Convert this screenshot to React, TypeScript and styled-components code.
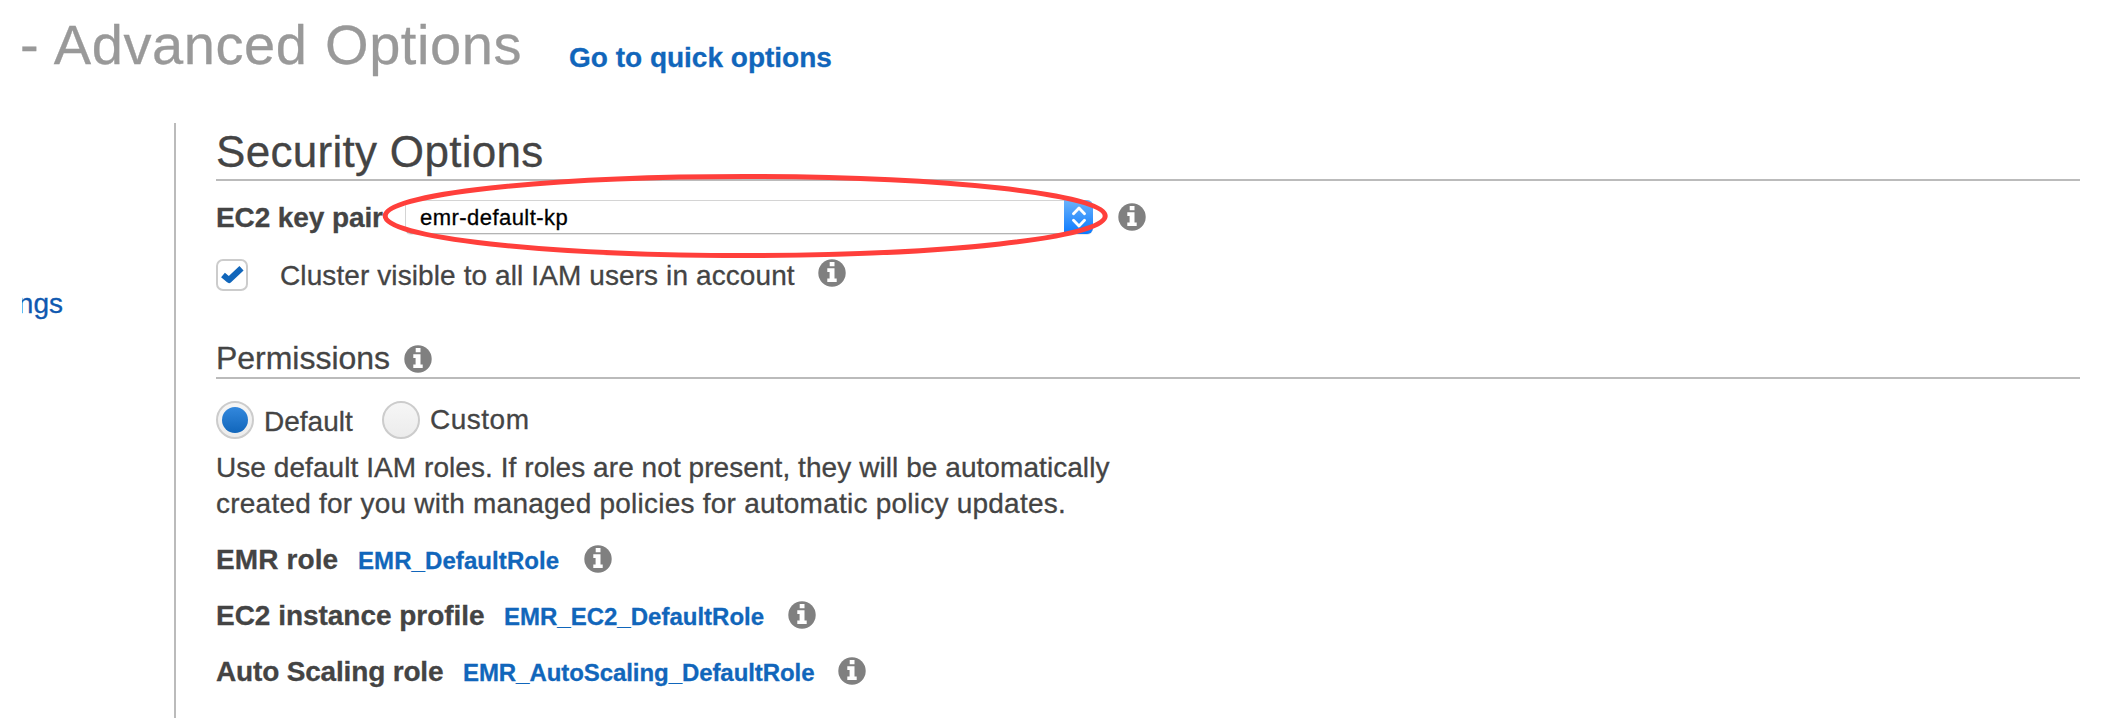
import React from 'react';
import styled, { createGlobalStyle } from 'styled-components';

const GlobalStyle = createGlobalStyle`
  * { box-sizing: border-box; }
  body {
    margin: 0;
    background: #fff;
    color: #444;
    font-family: "Liberation Sans", Arial, sans-serif;
    font-size: 28px;
    -webkit-text-stroke-width: 0.3px;
    overflow: hidden;
  }
`;

const Page = styled.div`
  width: 2102px;
  height: 718px;
  display: flex;
  flex-direction: column;
`;

const Header = styled.header`
  display: flex;
  height: 123px;
  padding-left: 20px;
  gap: 47px;
`;

const Title = styled.h1`
  margin: 13px 0 0;
  font-size: 56px;
  font-weight: 400;
  line-height: 64px;
  letter-spacing: 0.57px;
  word-spacing: 1.5px;
  color: #999;
  white-space: nowrap;
`;

const QuickLink = styled.a`
  margin-top: 40px;
  line-height: 36px;
  font-weight: 700;
  color: #1166bb;
  white-space: nowrap;
`;

const Body = styled.div`
  display: flex;
  flex: 1;
`;

const Sidebar = styled.nav`
  width: 174px;
  padding: 163px 0 0 22px;
`;

const StepLink = styled.a`
  display: flex;
  justify-content: flex-end;
  width: 41px;
  overflow: hidden;
  line-height: 36px;
  color: #0f59b0;
`;

const Main = styled.main`
  flex: 1;
  border-left: 2px solid #bbb;
  padding: 0 22px 0 40px;
`;

const SectionTitle = styled.h2`
  margin: 0;
  height: 58px;
  padding-top: 4px;
  border-bottom: 2px solid #bbb;
  font-size: 44px;
  font-weight: 400;
  line-height: 50px;
  letter-spacing: 0.3px;
`;

const SubTitle = styled.h3`
  display: flex;
  margin: 0;
  height: 40px;
  gap: 14px;
  border-bottom: 2px solid #bbb;
  font-size: 32px;
  font-weight: 400;
  line-height: 38px;
  letter-spacing: -0.02px;
`;

const KeyPairRow = styled.div`
  position: relative;
  display: flex;
  height: 78px;
  padding-top: 19px;
`;

const Label = styled.span<{ $spacing?: number }>`
  font-weight: 700;
  line-height: 36px;
  letter-spacing: ${(p) => p.$spacing ?? 0}px;
  white-space: nowrap;
`;

const KeyPairLabel = styled(Label)`
  width: 189px;
`;

const Select = styled.div`
  display: flex;
  justify-content: space-between;
  width: 688px;
  height: 34px;
  border: 1px solid #d4d4d4;
  border-bottom: 1px solid #b4b4b4;
  border-right: 0;
  border-radius: 6px;
  box-shadow: 0 1px 0 #e8e8e8;
  padding-left: 14px;
  font-size: 22px;
  line-height: 33px;
  letter-spacing: 0.45px;
  color: #000;
`;

const SelectArrows = styled.span`
  display: flex;
  align-items: center;
  justify-content: center;
  width: 29px;
  height: 34px;
  margin-top: -1px;
  border-radius: 0 6px 6px 0;
  background: linear-gradient(#6cb3fa, #0a7aff);
`;

const Highlight = styled.svg`
  position: absolute;
  left: 166px;
  top: -7px;
`;

const InfoMark = styled.svg<{ $top?: number; $left?: number }>`
  flex: none;
  display: block;
  margin-top: ${(p) => p.$top ?? 0}px;
  margin-left: ${(p) => p.$left ?? 0}px;
`;

const CheckRow = styled.div`
  display: flex;
  height: 80px;
`;

const Checkbox = styled.span`
  display: flex;
  align-items: center;
  justify-content: center;
  width: 32px;
  height: 32px;
  border: 2px solid #ccc;
  border-radius: 7px;
  background: #fff;
`;

const CheckText = styled.span`
  margin: -1px 0 0 32px;
  line-height: 36px;
  letter-spacing: 0.1px;
  white-space: nowrap;
`;

const RadioRow = styled.div`
  display: flex;
  height: 71px;
  padding-top: 22px;
`;

const Radio = styled.span<{ $checked?: boolean }>`
  flex: none;
  display: flex;
  align-items: center;
  justify-content: center;
  width: 38px;
  height: 38px;
  border: 2px solid #ccc;
  border-radius: 50%;
  background: linear-gradient(#f6f6f6, #ececec);
  &::after {
    content: "";
    width: 26px;
    height: 26px;
    border-radius: 50%;
    background: ${(p) => (p.$checked ? 'linear-gradient(#3388dd, #1166bb)' : 'none')};
  }
`;

const RadioText = styled.span<{ $top: number; $width: number; $spacing?: number }>`
  width: ${(p) => p.$width}px;
  margin: ${(p) => p.$top}px 0 0 10px;
  line-height: 36px;
  letter-spacing: ${(p) => p.$spacing ?? 0}px;
`;

const Description = styled.p`
  margin: 0;
  height: 91px;
  line-height: 36px;
`;

const Line = styled.span<{ $spacing: number }>`
  display: block;
  letter-spacing: ${(p) => p.$spacing}px;
  white-space: nowrap;
`;

const RoleRow = styled.div`
  display: flex;
  height: 56px;
`;

const RoleLabel = styled(Label)<{ $width: number }>`
  width: ${(p) => p.$width}px;
  padding-top: 1px;
`;

const RoleLink = styled.a<{ $spacing: number; $width: number }>`
  width: ${(p) => p.$width}px;
  padding-top: 1px;
  font-size: 24px;
  font-weight: 700;
  line-height: 38px;
  letter-spacing: ${(p) => p.$spacing}px;
  color: #1166bb;
  white-space: nowrap;
`;

function Info({ top, left }: { top?: number; left?: number }) {
  return (
    <InfoMark $top={top} $left={left} width="28" height="28" viewBox="0 0 28 28">
      <circle cx="14" cy="14" r="13.7" fill="#808080" />
      <path d="M11.7 3h4.8v4.2h-4.800zM9.300 9.300h7.200v10.200h2.200v3.500H9.300v-3.500h2.300v-6.600H9.300z" fill="#fff" />
    </InfoMark>
  );
}

const roles = [
  { label: 'EMR role', labelWidth: 142, labelSpacing: 0.12, link: 'EMR_DefaultRole', linkWidth: 226, linkSpacing: 0.08 },
  { label: 'EC2 instance profile', labelWidth: 288, labelSpacing: -0.03, link: 'EMR_EC2_DefaultRole', linkWidth: 284, linkSpacing: 0 },
  { label: 'Auto Scaling role', labelWidth: 247, labelSpacing: -0.17, link: 'EMR_AutoScaling_DefaultRole', linkWidth: 375, linkSpacing: -0.07 },
];

export default function App() {
  return (
    <Page>
      <GlobalStyle />
      <Header>
        <Title>- Advanced Options</Title>
        <QuickLink>Go to quick options</QuickLink>
      </Header>
      <Body>
        <Sidebar>
          <StepLink>ngs</StepLink>
        </Sidebar>
        <Main>
          <SectionTitle>Security Options</SectionTitle>
          <KeyPairRow>
            <KeyPairLabel $spacing={-0.1}>EC2 key pair</KeyPairLabel>
            <Select>
              emr-default-kp
              <SelectArrows>
                <svg width="14" height="22" viewBox="0 0 14 22" fill="none" stroke="#fff" strokeWidth="2.8" strokeLinecap="round" strokeLinejoin="round">
                  <path d="M1.500 7.800 7 2l5.500 5.800M1.500 14.200 7 20l5.500-5.800" />
                </svg>
              </SelectArrows>
            </Select>
            <Info top={3} left={25} />
            <Highlight width="726" height="86" viewBox="0 0 726 86">
              <ellipse cx="363.2" cy="42" rx="360" ry="39.5" fill="none" stroke="#ff3f3b" strokeWidth="5" />
            </Highlight>
          </KeyPairRow>
          <CheckRow>
            <Checkbox>
              <svg width="24" height="20" viewBox="0 0 24 20" fill="none" stroke="#1166bb" strokeWidth="6" strokeLinejoin="round">
                <path d="M3 10 9 15 21.500 3.200" />
              </svg>
            </Checkbox>
            <CheckText>Cluster visible to all IAM users in account</CheckText>
            <Info left={23} />
          </CheckRow>
          <SubTitle>
            Permissions
            <Info top={6} />
          </SubTitle>
          <RadioRow>
            <Radio $checked />
            <RadioText $top={3} $width={118}>Default</RadioText>
            <Radio />
            <RadioText $top={1} $width={110} $spacing={0.5}>Custom</RadioText>
          </RadioRow>
          <Description>
            <Line $spacing={0.065}>Use default IAM roles. If roles are not present, they will be automatically</Line>
            <Line $spacing={0.235}>created for you with managed policies for automatic policy updates.</Line>
          </Description>
          {roles.map((role) => (
            <RoleRow key={role.label}>
              <RoleLabel $width={role.labelWidth} $spacing={role.labelSpacing}>{role.label}</RoleLabel>
              <RoleLink $width={role.linkWidth} $spacing={role.linkSpacing}>{role.link}</RoleLink>
              <Info top={4} />
            </RoleRow>
          ))}
        </Main>
      </Body>
    </Page>
  );
}
